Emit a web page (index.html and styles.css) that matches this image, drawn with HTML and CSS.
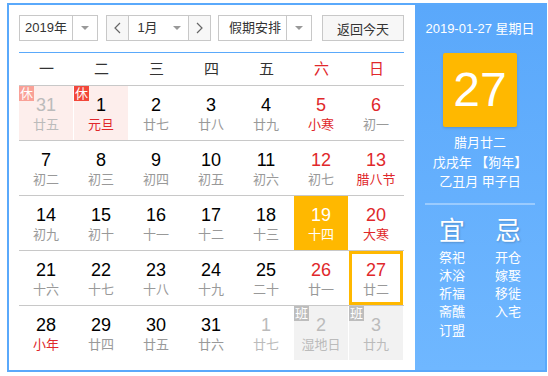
FILE: index.html
```html
<!DOCTYPE html>
<html lang="zh-CN">
<head>
  <meta charset="UTF-8">
  <title>万年历</title>
  <link rel="stylesheet" href="styles.css">
</head>
<body>
  <div class="calendar">
    <div class="main">
      <div class="toolbar">
        <div class="select year">
          <span class="select-text">2019年</span>
          <span class="select-arrow"><i class="caret"></i></span>
        </div>
        <div class="select month">
          <span class="nav-btn">
            <svg width="7" height="12" viewBox="0 0 7 12"><polyline points="6,1 1,6 6,11" fill="none" stroke="#666" stroke-width="1.2"/></svg>
          </span>
          <span class="select-text">1月</span>
          <span class="select-arrow plain"><i class="caret"></i></span>
          <span class="nav-btn">
            <svg width="7" height="12" viewBox="0 0 7 12"><polyline points="1,1 6,6 1,11" fill="none" stroke="#666" stroke-width="1.2"/></svg>
          </span>
        </div>
        <div class="select holiday">
          <span class="select-text">假期安排</span>
          <span class="select-arrow"><i class="caret"></i></span>
        </div>
        <button type="button" class="today-btn">返回今天</button>
      </div>

      <div class="weekdays">
        <span>一</span><span>二</span><span>三</span><span>四</span><span>五</span>
        <span class="red">六</span><span class="red">日</span>
      </div>

      <div class="week">
        <div class="day other rest"><i class="badge">休</i><b>31</b><em>廿五</em></div>
        <div class="day rest"><i class="badge">休</i><b>1</b><em class="red">元旦</em></div>
        <div class="day"><b>2</b><em>廿七</em></div>
        <div class="day"><b>3</b><em>廿八</em></div>
        <div class="day"><b>4</b><em>廿九</em></div>
        <div class="day"><b class="red">5</b><em class="red">小寒</em></div>
        <div class="day"><b class="red">6</b><em>初一</em></div>
      </div>
      <div class="week">
        <div class="day"><b>7</b><em>初二</em></div>
        <div class="day"><b>8</b><em>初三</em></div>
        <div class="day"><b>9</b><em>初四</em></div>
        <div class="day"><b>10</b><em>初五</em></div>
        <div class="day"><b>11</b><em>初六</em></div>
        <div class="day"><b class="red">12</b><em>初七</em></div>
        <div class="day"><b class="red">13</b><em class="red">腊八节</em></div>
      </div>
      <div class="week">
        <div class="day"><b>14</b><em>初九</em></div>
        <div class="day"><b>15</b><em>初十</em></div>
        <div class="day"><b>16</b><em>十一</em></div>
        <div class="day"><b>17</b><em>十二</em></div>
        <div class="day"><b>18</b><em>十三</em></div>
        <div class="day selected"><b>19</b><em>十四</em></div>
        <div class="day"><b class="red">20</b><em class="red">大寒</em></div>
      </div>
      <div class="week">
        <div class="day"><b>21</b><em>十六</em></div>
        <div class="day"><b>22</b><em>十七</em></div>
        <div class="day"><b>23</b><em>十八</em></div>
        <div class="day"><b>24</b><em>十九</em></div>
        <div class="day"><b>25</b><em>二十</em></div>
        <div class="day"><b class="red">26</b><em>廿一</em></div>
        <div class="day today"><b class="red">27</b><em>廿二</em></div>
      </div>
      <div class="week">
        <div class="day"><b>28</b><em class="red">小年</em></div>
        <div class="day"><b>29</b><em>廿四</em></div>
        <div class="day"><b>30</b><em>廿五</em></div>
        <div class="day"><b>31</b><em>廿六</em></div>
        <div class="day other"><b>1</b><em>廿七</em></div>
        <div class="day other work"><i class="badge">班</i><b>2</b><em>湿地日</em></div>
        <div class="day other work"><i class="badge">班</i><b>3</b><em>廿九</em></div>
      </div>
    </div>

    <div class="side">
      <div class="side-date">2019-01-27 星期日</div>
      <div class="big-day">27</div>
      <div class="lunar">
        <p>腊月廿二</p>
        <p>戊戌年 【狗年】</p>
        <p>乙丑月 甲子日</p>
      </div>
      <div class="side-line"></div>
      <div class="almanac">
        <div class="almanac-col">
          <h2>宜</h2>
          <p>祭祀</p><p>沐浴</p><p>祈福</p><p>斋醮</p><p>订盟</p>
        </div>
        <div class="almanac-col">
          <h2>忌</h2>
          <p>开仓</p><p>嫁娶</p><p>移徙</p><p>入宅</p>
        </div>
      </div>
    </div>
  </div>
</body>
</html>
```

FILE: styles.css
```css
body {
  margin: 0;
  font-family: "Liberation Sans", "Noto Sans CJK SC", sans-serif;
  background: #fff;
}
.calendar {
  display: flex;
  width: 540px;
  height: 369px;
  margin: 3px 0 0 7px;
  border: 2px solid #5aa9fb;
  box-sizing: border-box;
}
.main {
  width: 406px;
  padding: 10px 0 0 10px;
  box-sizing: border-box;
}
.toolbar {
  display: flex;
  width: 385px;
  height: 26px;
  padding-bottom: 11px;
  border-bottom: 1px solid #5aa9fb;
}
.select {
  display: flex;
  height: 26px;
  border: 1px solid #c8c8c8;
  box-sizing: border-box;
  font-size: 13px;
  color: #333;
}
.select-text {
  flex: 1;
  line-height: 24px;
  text-align: center;
}
.select-arrow {
  display: flex;
  align-items: center;
  justify-content: center;
  width: 24px;
  border-left: 1px solid #c8c8c8;
}
.select-arrow.plain {
  border-left: none;
  width: 22px;
}
.caret {
  width: 0;
  height: 0;
  border-left: 4px solid transparent;
  border-right: 4px solid transparent;
  border-top: 4px solid #999;
}
.year {
  width: 79px;
}
.month {
  width: 105px;
  margin-left: 8px;
}
.holiday {
  width: 94px;
  margin-left: 7px;
}
.holiday .select-text {
  text-align: left;
  padding-left: 10px;
}
.nav-btn {
  display: flex;
  align-items: center;
  justify-content: center;
  width: 21px;
  background: #f7f7f7;
}
.nav-btn:first-child {
  border-right: 1px solid #c8c8c8;
}
.nav-btn:last-child {
  border-left: 1px solid #c8c8c8;
}
.today-btn {
  width: 82px;
  height: 26px;
  margin-left: 10px;
  padding: 0;
  border: 1px solid #c8c8c8;
  background: #f7f7f7;
  font-family: inherit;
  font-size: 13px;
  color: #333;
}
.weekdays {
  display: grid;
  grid-template-columns: repeat(7, 55px);
  height: 32px;
  line-height: 32px;
  text-align: center;
  font-size: 15px;
  color: #333;
}
.red {
  color: #e0282b;
}
.week {
  display: grid;
  grid-template-columns: repeat(7, 54px);
  column-gap: 1px;
  width: 385px;
  border-top: 1px solid #c8c8c8;
}
.day {
  position: relative;
  height: 54px;
  box-sizing: border-box;
  padding-top: 8px;
  text-align: center;
}
.day b {
  display: block;
  font-weight: normal;
  font-size: 18px;
  line-height: 22px;
  color: #000;
}
.day b.red {
  color: #e0282b;
}
.day em {
  display: block;
  font-style: normal;
  font-size: 13px;
  line-height: 18px;
  color: #999;
}
.day em.red {
  color: #e0282b;
}
.day.rest {
  background: #fdeeec;
}
.day.other b,
.day.other em {
  color: #bbb;
}
.day.work {
  background: #f2f2f2;
}
.badge {
  position: absolute;
  top: 0;
  left: 0;
  width: 15px;
  height: 15px;
  font-style: normal;
  font-size: 13px;
  line-height: 15px;
  text-align: center;
  color: #fff;
  background: #f2473a;
}
.day.other.rest .badge {
  background: #f9a197;
}
.day.work .badge {
  background: #bdbdbd;
}
.day.selected {
  background: #ffb800;
}
.day.selected b,
.day.selected em {
  color: #fff;
}
.day.today {
  border: 3px solid #ffb800;
  padding-top: 5px;
}
.side {
  flex: 1;
  display: flex;
  flex-direction: column;
  align-items: center;
  background: linear-gradient(#5aa8fb, #6fb7ff);
  color: #fff;
}
.side-date {
  margin-top: 14px;
  font-size: 13px;
  line-height: 20px;
}
.big-day {
  width: 74px;
  height: 74px;
  margin-top: 14px;
  border-radius: 2px;
  background: #ffb800;
  box-shadow: 0 1px 3px rgba(0, 0, 0, 0.15);
  font-size: 48px;
  line-height: 74px;
  text-align: center;
}
.lunar {
  margin-top: 6px;
  text-align: center;
  font-size: 13px;
  line-height: 19.5px;
}
.lunar p {
  margin: 0;
}
.side-line {
  width: 110px;
  height: 2px;
  margin-top: 11px;
  background: rgba(255, 255, 255, 0.35);
}
.almanac {
  display: flex;
  margin-top: 11px;
}
.almanac-col {
  width: 56px;
  text-align: center;
}
.almanac h2 {
  margin: 0 0 3px;
  font-size: 26px;
  font-weight: normal;
  line-height: 30px;
  text-shadow: 1px 1px 2px rgba(0, 0, 0, 0.2);
}
.almanac p {
  margin: 0;
  font-size: 13px;
  line-height: 18.3px;
}
```
